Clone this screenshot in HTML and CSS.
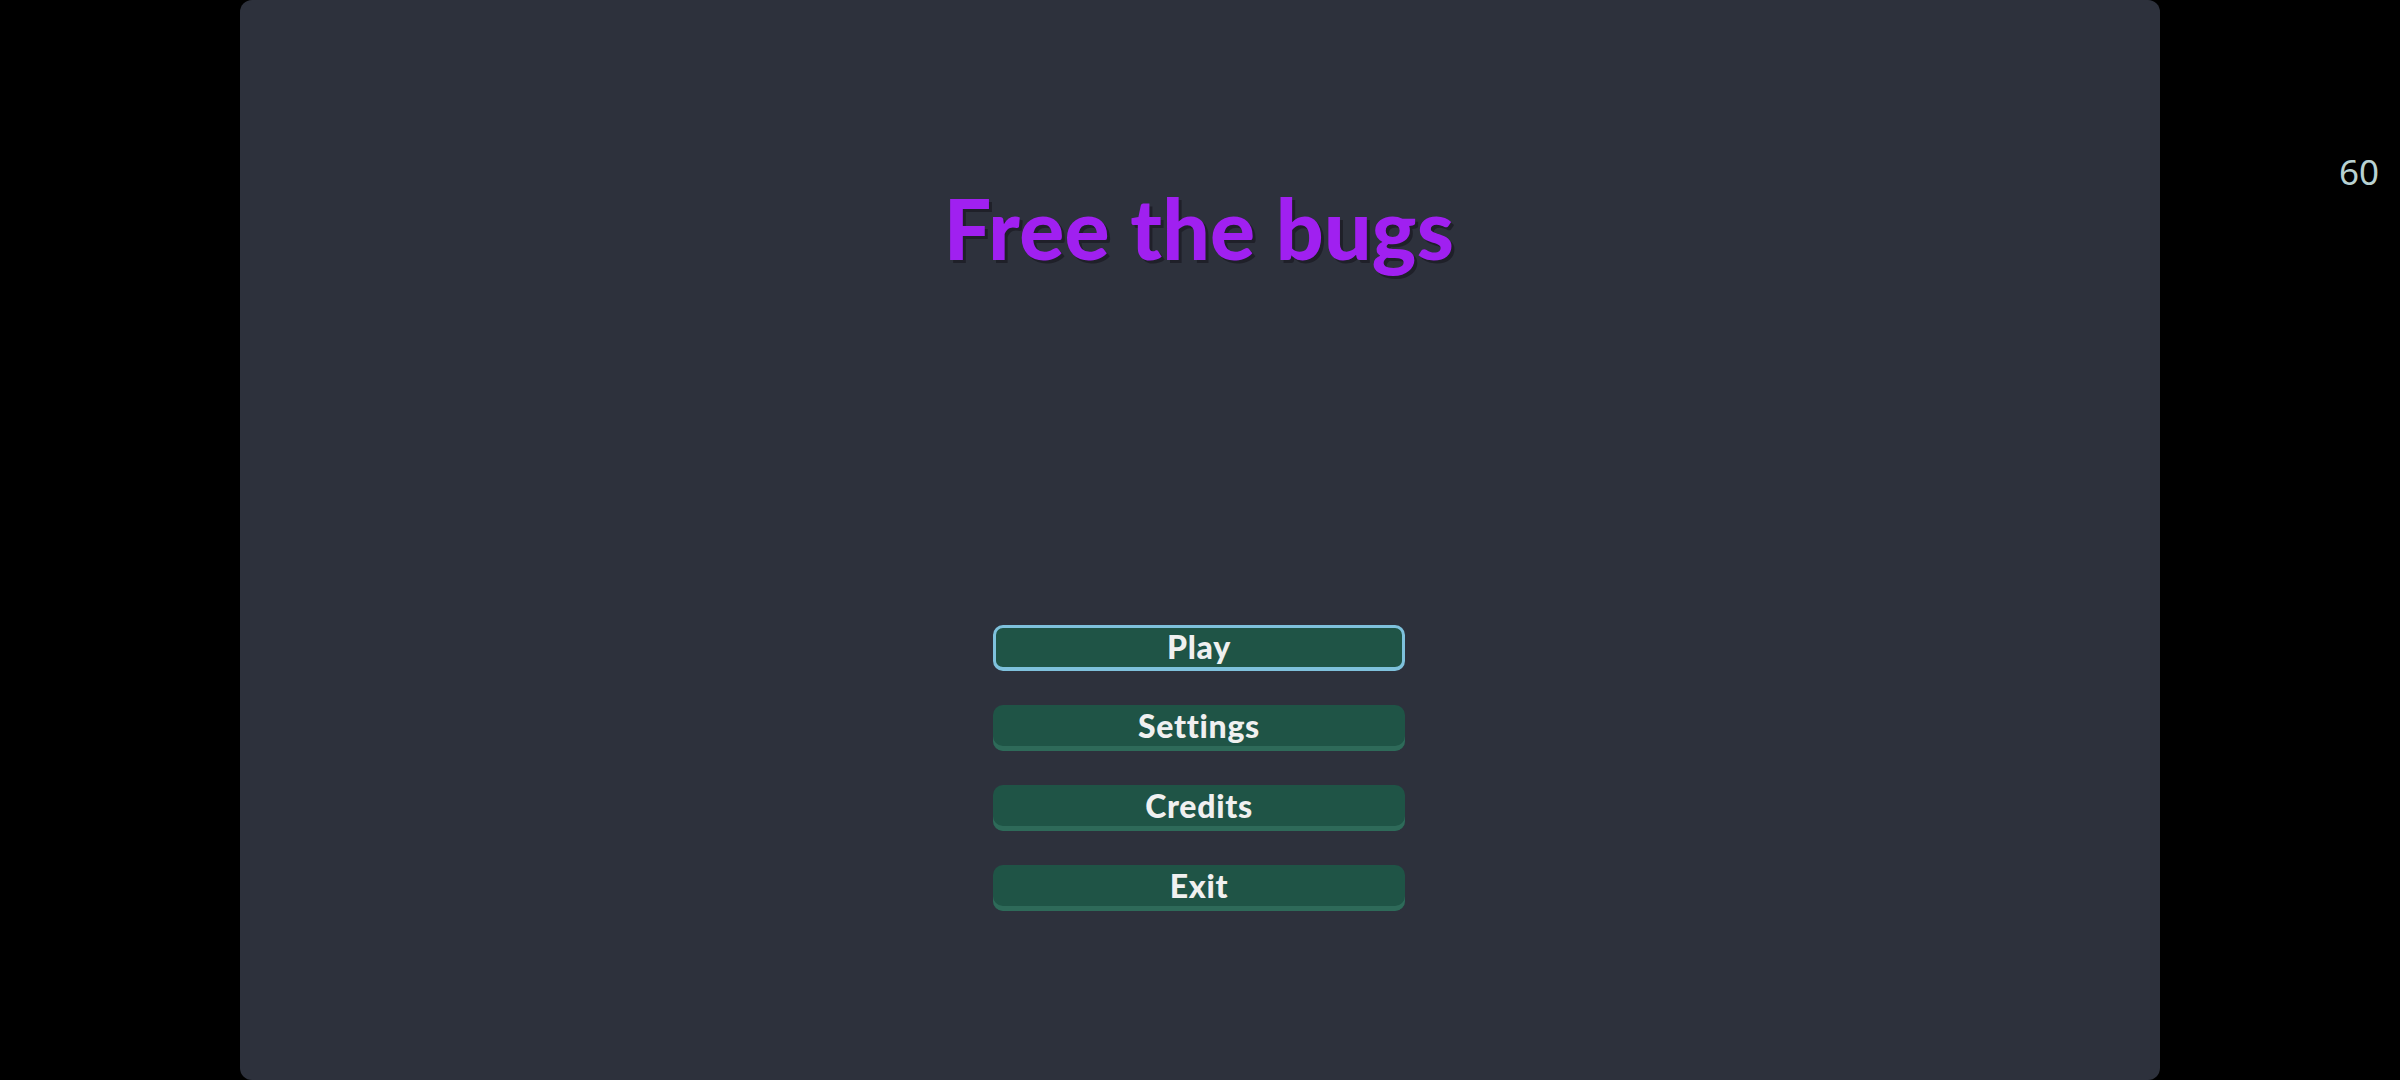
FILE: index.html
```html
<!DOCTYPE html>
<html lang="en">
<head>
  <meta charset="UTF-8" />
  <title>Free the bugs</title>
  <link rel="stylesheet" href="styles.css">
</head>
<body>

<div class="game">
  <h1 class="title">Free the bugs</h1>
  <div class="menu">
    <button class="menu-btn focused">Play</button>
    <button class="menu-btn">Settings</button>
    <button class="menu-btn">Credits</button>
    <button class="menu-btn">Exit</button>
  </div>
</div>

<div class="fps">60</div>

</body>
</html>
```

FILE: styles.css
```css
html, body {
  height: 100%;
}

body {
  margin: 0;
  background-color: #000;
  font-family: 'Lato', 'Noto Sans', sans-serif;
  display: flex;
  justify-content: center;
  overflow: hidden;
}

.game {
  box-sizing: border-box;
  width: 1920px;
  height: 1080px;
  padding-right: 2px;
  background-color: #2d313c;
  border-radius: 12px;
  display: flex;
  flex-direction: column;
  align-items: center;
}

.title {
  margin: 178px 0 0;
  height: 100px;
  line-height: 100px;
  font-size: 84px;
  font-weight: 900;
  letter-spacing: 0.3px;
  color: #a020f0;
  text-shadow: 3px 3px 0 #1f2029;
}

.menu {
  margin-top: 347px;
  display: flex;
  flex-direction: column;
  gap: 34px;
}

.menu-btn {
  display: block;
  box-sizing: border-box;
  width: 412px;
  height: 46px;
  padding: 0 0 4px;
  border: none;
  border-radius: 10px;
  background-color: #1f5446;
  box-shadow: inset 0 -5px 0 #2e6a59;
  color: #f0f0f0;
  font-family: inherit;
  font-size: 32px;
  font-weight: 900;
  letter-spacing: 0.7px;
  line-height: 38px;
}

.focused {
  border: 3px solid #7ec1dc;
  border-bottom-width: 4px;
  padding: 0 0 2px;
  line-height: 36px;
  box-shadow: none;
}

.fps {
  position: absolute;
  top: 148px;
  right: 21px;
  font-family: 'Noto Sans', sans-serif;
  font-size: 35px;
  line-height: 48px;
  color: #b8d2d2;
}
```
